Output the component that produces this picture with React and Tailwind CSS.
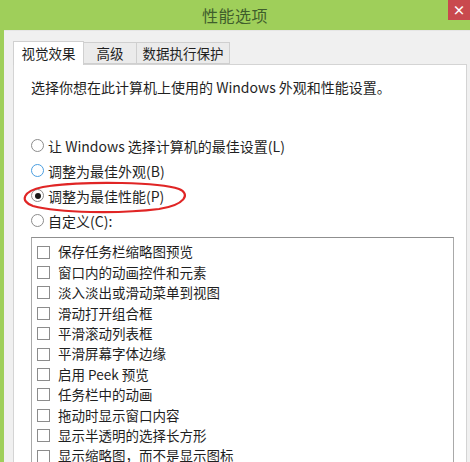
import React from 'react';

const font = { fontFamily: '"Noto Sans CJK SC", "Noto Sans", sans-serif' };

// 单选项
const Radio = ({ label, checked, hover }) => (
  <div className="flex items-center h-[25px]">
    <span
      className={`w-[13px] h-[13px] rounded-full border bg-white flex items-center justify-center ${
        hover ? 'border-[#4a9ee0]' : 'border-[#8c8c8c]'
      }`}
    >
      {checked && <span className="w-[6px] h-[6px] rounded-full bg-[#1a1a1a]" />}
    </span>
    <span className="ml-[4px] text-[14px] text-[#1f1f1f] leading-none">{label}</span>
  </div>
);

const items = [
  '保存任务栏缩略图预览',
  '窗口内的动画控件和元素',
  '淡入淡出或滑动菜单到视图',
  '滑动打开组合框',
  '平滑滚动列表框',
  '平滑屏幕字体边缘',
  '启用 Peek 预览',
  '任务栏中的动画',
  '拖动时显示窗口内容',
  '显示半透明的选择长方形',
  '显示缩略图，而不是显示图标',
];

export default function App() {
  return (
    <div className="relative w-[470px] h-[462px] overflow-hidden bg-[#9fcf5a] flex flex-col" style={font}>
      {/* 标题栏 */}
      <div className="h-[30px] flex items-center justify-center shrink-0">
        <span className="text-[16px] text-[#3f5e2c] tracking-[0.5px]">性能选项</span>
      </div>
      <div className="absolute right-0 top-0 w-[22px] h-[20px] bg-[#c9494e] flex items-center justify-center text-white text-[13px] font-bold">
        ×
      </div>

      {/* 窗口主体 */}
      <div className="flex-1 ml-[4px] bg-[#f0f0f0] border-t border-[#e6e6e6] pt-[9px] pl-[9px] pr-[3px] flex flex-col">
        {/* 选项卡 */}
        <div className="flex items-end h-[24px] text-[13.5px] text-[#1f1f1f]">
          <div className="h-[24px] w-[71px] bg-white border border-b-0 border-[#d0d0d0] flex items-center justify-center relative z-10 -mb-px">
            视觉效果
          </div>
          <div className="h-[22px] w-[53px] bg-[#ebebeb] border border-l-0 border-[#cfcfcf] flex items-center justify-center">
            高级
          </div>
          <div className="h-[22px] w-[93px] bg-[#ebebeb] border border-l-0 border-[#cfcfcf] flex items-center justify-center">
            数据执行保护
          </div>
        </div>

        {/* 面板 */}
        <div className="flex-1 bg-white border border-[#d4d4d4] pl-[17px] pr-[12px] pt-[12px] flex flex-col">
          <p className="text-[14px] leading-[20px] text-[#1f1f1f]">
            选择你想在此计算机上使用的 Windows 外观和性能设置。
          </p>
          <div className="mt-[36px] flex flex-col">
            <Radio label="让 Windows 选择计算机的最佳设置(L)" />
            <Radio label="调整为最佳外观(B)" hover />
            <Radio label="调整为最佳性能(P)" checked />
            <Radio label="自定义(C):" />
          </div>
          <div className="mt-[4px] flex-1 border border-[#a9a9a9] border-t-[#8f8f8f] pt-[4px] pl-[5px] flex flex-col">
            {items.map((t) => (
              <div key={t} className="flex items-center h-[20.4px] shrink-0">
                <span className="w-[13px] h-[13px] border border-[#8c8c8c] bg-white shrink-0" />
                <span className="ml-[8px] text-[13.5px] text-[#1f1f1f] leading-none whitespace-nowrap">{t}</span>
              </div>
            ))}
          </div>
        </div>
      </div>

      {/* 红色圈注 */}
      <svg className="absolute left-[19px] top-[180px]" width="170" height="34" viewBox="0 0 170 34">
        <path
          d="M30 6 C 70 1, 140 2, 160 9 C 172 14, 166 25, 140 29 C 100 34, 40 33, 14 26 C 0 21, 4 11, 24 7 C 40 4, 60 3, 80 3"
          fill="none"
          stroke="#e02525"
          strokeWidth="2.2"
          strokeLinecap="round"
        />
      </svg>
    </div>
  );
}
